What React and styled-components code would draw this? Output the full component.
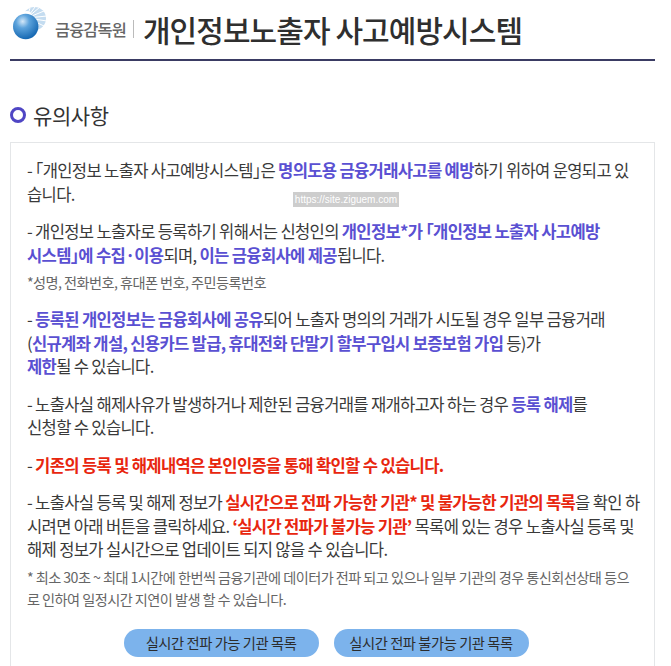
import React from "react";
import styled, { createGlobalStyle } from "styled-components";

const GlobalStyle = createGlobalStyle`
  html, body {
    margin: 0;
    padding: 0;
    background: #fff;
  }
  body {
    font-family: "Noto Sans CJK KR", "Noto Sans", sans-serif;
    color: #333;
  }
`;

const Page = styled.div`
  width: 671px;
  height: 666px;
  overflow: hidden;
  box-sizing: border-box;
  padding: 0 16px 0 10px;
  position: relative;
`;

const Header = styled.header`
  height: 57px;
  display: flex;
  align-items: center;
  border-bottom: 2px solid #3a3b63;
  padding: 0 0 2px 3px;
  box-sizing: content-box;
`;

const LogoMark = styled.svg`
  width: 34px;
  height: 34px;
  flex: none;
  align-self: flex-start;
  margin-top: 6px;
`;

const OrgName = styled.span`
  font-size: 16.4px;
  font-weight: 500;
  color: #666;
  letter-spacing: -0.9px;
  margin-left: 8px;
`;

const Divider = styled.span`
  width: 1px;
  height: 18px;
  background: #bbb;
  margin: 0 9px 0 7px;
`;

const Title = styled.h1`
  margin: 0;
  font-size: 30px;
  font-weight: 500;
  color: #2f2f2f;
  letter-spacing: -0.93px;
`;

const SectionTitle = styled.h2`
  display: flex;
  align-items: center;
  gap: 7px;
  margin: 36px 0 0;
  height: 36px;
  font-size: 21px;
  font-weight: 400;
  color: #333;
  letter-spacing: -0.4px;
`;

const Ring = styled.span`
  width: 16px;
  height: 16px;
  box-sizing: border-box;
  border: 3px solid #4f46c4;
  border-radius: 50%;
`;

const NoticeBox = styled.section`
  margin-top: 9px;
  box-sizing: border-box;
  border: 1px solid #e4e6e8;
  background-color: #fff;
  background-image: radial-gradient(#f1f3f6 0.6px, transparent 0.7px);
  background-size: 6px 6px;
  padding: 16px 16px 0;
  height: 560px;
`;

const Para = styled.p`
  margin: ${props => props.$top || "0"} 0 14px;
  font-size: 16.6px;
  line-height: 23.5px;
  letter-spacing: -0.69px;
  color: #3a3a3a;
  white-space: nowrap;
`;

const Note = styled.p`
  margin: -10px 0 0;
  font-size: 14.2px;
  line-height: 22px;
  letter-spacing: -0.56px;
  color: #666;
  white-space: nowrap;
`;

const Bracket = styled.span`
  font-feature-settings: "halt";
`;

const Blue = styled.strong`
  font-weight: 700;
  color: #5a50d2;
`;

const Red = styled.strong`
  font-weight: 700;
  color: #e8260e;
`;

const ButtonRow = styled.div`
  display: flex;
  justify-content: center;
  gap: 15px;
  margin-top: 19px;
  padding-right: 13px;
`;

const ListButton = styled.button`
  width: 195px;
  height: 28px;
  padding: 0;
  border: 0;
  border-radius: 14px;
  background: #7cb3ec;
  color: #2c2c2c;
  font-family: inherit;
  font-size: 14.3px;
  letter-spacing: -0.45px;
`;

const Watermark = styled.span`
  position: absolute;
  left: 293px;
  top: 192px;
  width: 106px;
  height: 15px;
  background: #cdcdcd;
  color: #fff;
  font-family: "Liberation Sans", sans-serif;
  font-size: 10px;
  line-height: 15px;
  text-align: center;
  white-space: nowrap;
`;

const Logo = () => (
  <LogoMark viewBox="0 0 34 34">
    <defs>
      <radialGradient id="ball" cx="0.38" cy="0.3" r="0.75">
        <stop offset="0" stopColor="#d4e8f8" />
        <stop offset="0.35" stopColor="#5ca3dc" />
        <stop offset="1" stopColor="#0f62ae" />
      </radialGradient>
    </defs>
    <circle cx="21.5" cy="12.5" r="11.5" fill="#c4dcf0" />
    <g stroke="#fff" strokeWidth="1">
      <path d="M14 12 L22 1 M14 12 L27 1 M14 12 L31 5 M14 12 L34 10 M14 12 L34 15 M14 12 L31 20 M14 12 L17 2" />
    </g>
    <circle cx="14" cy="10" r="5" fill="#fff" />
    <circle cx="12.7" cy="20.5" r="12.7" fill="url(#ball)" />
  </LogoMark>
);

export default function App() {
  return (
    <Page>
      <GlobalStyle />
      <Header>
        <Logo />
        <OrgName>금융감독원</OrgName>
        <Divider />
        <Title>개인정보노출자 사고예방시스템</Title>
      </Header>
      <SectionTitle>
        <Ring />
        유의사항
      </SectionTitle>
      <NoticeBox>
        <Para>
          - <Bracket>「</Bracket>개인정보 노출자 사고예방시스템<Bracket>」</Bracket>은 <Blue>명의도용 금융거래사고를 예방</Blue>하기 위하여 운영되고 있<br />
          습니다.
        </Para>
        <Para>
          - 개인정보 노출자로 등록하기 위해서는 신청인의 <Blue>개인정보*가 <Bracket>「</Bracket>개인정보 노출자 사고예방<br />
          시스템<Bracket>」</Bracket>에 수집·이용</Blue>되며, <Blue>이는 금융회사에 제공</Blue>됩니다.
        </Para>
        <Note>*성명, 전화번호, 휴대폰 번호, 주민등록번호</Note>
        <Para $top="15px">
          - <Blue>등록된 개인정보는 금융회사에 공유</Blue>되어 노출자 명의의 거래가 시도될 경우 일부 금융거래<br />
          (<Blue>신규계좌 개설, 신용카드 발급, 휴대전화 단말기 할부구입시 보증보험 가입</Blue> 등)가<br />
          <Blue>제한</Blue>될 수 있습니다.
        </Para>
        <Para>
          - 노출사실 해제사유가 발생하거나 제한된 금융거래를 재개하고자 하는 경우 <Blue>등록 해제</Blue>를<br />
          신청할 수 있습니다.
        </Para>
        <Para>
          - <Red>기존의 등록 및 해제내역은 본인인증을 통해 확인할 수 있습니다.</Red>
        </Para>
        <Para>
          - 노출사실 등록 및 해제 정보가 <Red>실시간으로 전파 가능한 기관* 및 불가능한 기관의 목록</Red>을 확인 하<br />
          시려면 아래 버튼을 클릭하세요. <Red>‘실시간 전파가 불가능 기관’</Red> 목록에 있는 경우 노출사실 등록 및<br />
          해제 정보가 실시간으로 업데이트 되지 않을 수 있습니다.
        </Para>
        <Note>
          * 최소 30초 ~ 최대 1시간에 한번씩 금융기관에 데이터가 전파 되고 있으나 일부 기관의 경우 통신회선상태 등으<br />
          로 인하여 일정시간 지연이 발생 할 수 있습니다.
        </Note>
        <ButtonRow>
          <ListButton>실시간 전파 가능 기관 목록</ListButton>
          <ListButton>실시간 전파 불가능 기관 목록</ListButton>
        </ButtonRow>
      </NoticeBox>
      <Watermark>https://site.ziguem.com</Watermark>
    </Page>
  );
}
